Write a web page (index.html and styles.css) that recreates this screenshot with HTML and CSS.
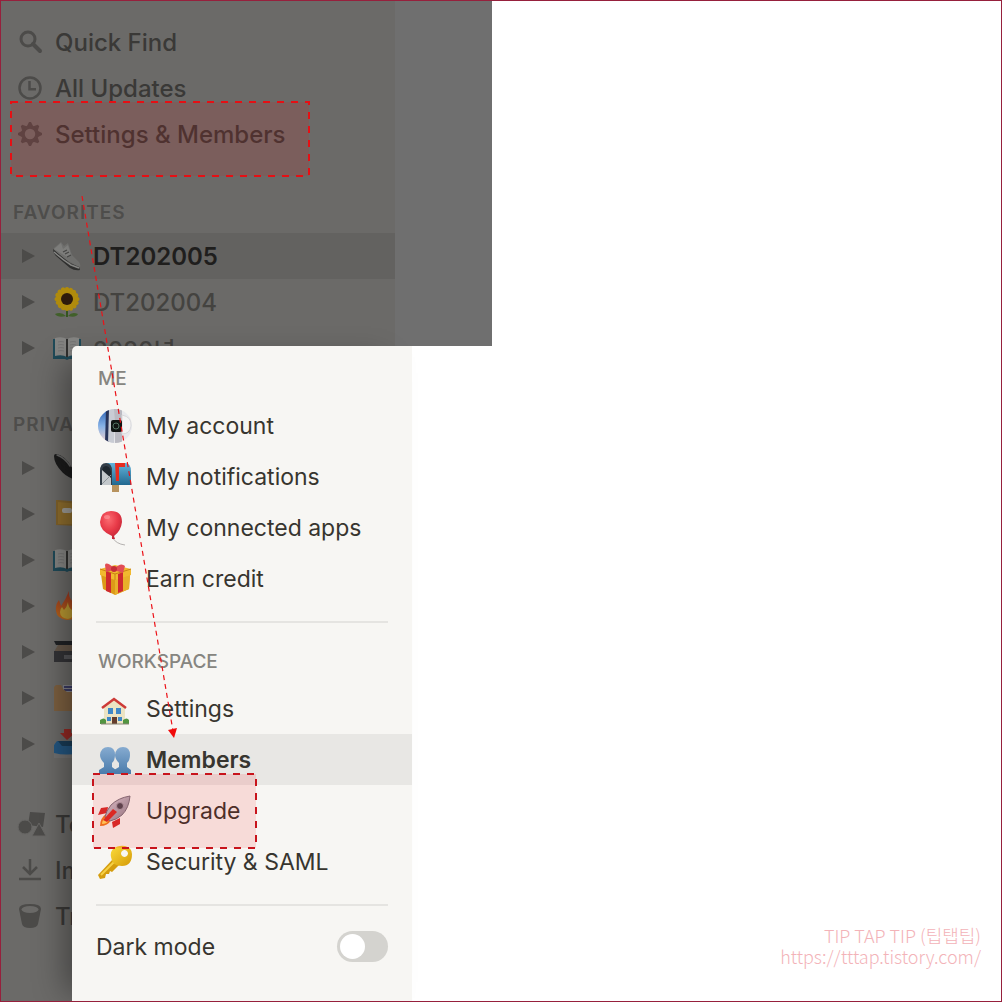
FILE: index.html
```html
<!DOCTYPE html>
<html lang="en">
<head>
<meta charset="utf-8">
<title>Settings &amp; Members</title>
<link rel="stylesheet" href="styles.css">
</head>
<body>
<svg class="defs" aria-hidden="true">
  <defs>
    <linearGradient id="gBlue" x1="0" y1="0" x2="0" y2="1"><stop offset="0" stop-color="#62b4dc"/><stop offset="1" stop-color="#22688f"/></linearGradient>
    <linearGradient id="gPeople" x1="0" y1="0" x2="0" y2="1"><stop offset="0" stop-color="#86abd0"/><stop offset="1" stop-color="#4a7bab"/></linearGradient>
    <radialGradient id="gBalloon" cx=".4" cy=".3" r=".8"><stop offset="0" stop-color="#fb6a70"/><stop offset=".5" stop-color="#e83a48"/><stop offset="1" stop-color="#b81f30"/></radialGradient>
    <linearGradient id="gKey" x1="0" y1="0" x2="1" y2="1"><stop offset="0" stop-color="#fbdc3c"/><stop offset="1" stop-color="#d59a06"/></linearGradient>
    <linearGradient id="gRocket" x1="0" y1="0" x2="1" y2="1"><stop offset="0" stop-color="#dcd6e0"/><stop offset="1" stop-color="#857e8c"/></linearGradient>
    <linearGradient id="gPhoto" x1="0" y1="0" x2="0" y2="1"><stop offset="0" stop-color="#2c62b4"/><stop offset=".5" stop-color="#86b2e6"/><stop offset="1" stop-color="#f3d3cf"/></linearGradient>
    <linearGradient id="gFlame" x1="0" y1="0" x2="0" y2="1"><stop offset="0" stop-color="#9c3420"/><stop offset="1" stop-color="#b9691a"/></linearGradient>
    <clipPath id="cPhoto"><circle cx="17" cy="17" r="17"/></clipPath>
    <symbol id="tri" viewBox="0 0 13 14"><path d="M0 0 13 7 0 14Z" fill="currentColor"/></symbol>
    <symbol id="book" viewBox="0 0 28 28">
      <path d="M0 5h28v20H16l-2 1-2-1H0Z" fill="#1f4a58"/>
      <path d="M2 4q7-2 12 1 5-3 12-1v18q-7-2-12 1-5-3-12-1Z" fill="#858583"/>
      <path d="M14 5v18" stroke="#30302f" stroke-width="2"/>
      <path d="M5 8q3-1 6 0M5 11q3-1 6 0M5 14q3-1 6 0M5 17q3-1 6 0M17 8q3-1 6 0M17 11q3-1 6 0M17 14q3-1 6 0M17 17q3-1 6 0" stroke="#757574" fill="none"/>
    </symbol>
  </defs>
</svg>

<main class="page">
  <nav class="sidebar" aria-label="Sidebar">
    <div class="group actions">
      <button class="row" type="button">
        <svg class="glyph" viewBox="0 0 24 24"><circle cx="10" cy="9" r="7" fill="none" stroke="currentColor" stroke-width="3"/><path d="m15 14 7 7" stroke="currentColor" stroke-width="4" stroke-linecap="round"/></svg>
        <span>Quick Find</span>
      </button>
      <button class="row" type="button">
        <svg class="glyph" viewBox="0 0 24 24"><circle cx="12" cy="12" r="10.5" fill="none" stroke="currentColor" stroke-width="2.5"/><path d="M11.500 5v8.200H18" fill="none" stroke="currentColor" stroke-width="2.500"/></svg>
        <span>All Updates</span>
      </button>
      <button class="row" type="button">
        <svg class="glyph" viewBox="0 0 24 24"><circle cx="12" cy="12" r="7" fill="none" stroke="currentColor" stroke-width="3.500"/><g fill="currentColor"><path id="tooth" d="M9 4 11 0h2l2 4Z"/><use href="#tooth" transform="rotate(45 12 12)"/><use href="#tooth" transform="rotate(90 12 12)"/><use href="#tooth" transform="rotate(135 12 12)"/><use href="#tooth" transform="rotate(180 12 12)"/><use href="#tooth" transform="rotate(225 12 12)"/><use href="#tooth" transform="rotate(270 12 12)"/><use href="#tooth" transform="rotate(315 12 12)"/></g></svg>
        <span>Settings &amp; Members</span>
      </button>
    </div>

    <h2 class="heading">FAVORITES</h2>
    <div class="group">
      <a class="row page-row current" href="#dt202005">
        <svg class="tri"><use href="#tri"/></svg>
        <svg class="emoji" viewBox="0 0 28 28"><path d="M1 6 8 0l3 4 4-3 4 12 7 7q2 3 1 5L22 23 1 10Z" fill="#6f6f6d"/><path d="m1 7 7-6 2 6 5-4 3 10-4 2Z" fill="#7d7d7b"/><path d="M0 7q8 7 17 14l9 4 1 3q-5 1-10-2L3 14Q0 11 0 7Z" fill="#2f2f2e"/><path d="M1 10q9 8 17 13l8 3" stroke="#858583" stroke-width="1.500" fill="none"/><path d="m10 10 4-2M12 12l4-2M14 15l4-2" stroke="#454544" stroke-width="1.200"/></svg>
        <span>DT202005</span>
      </a>
      <a class="row page-row" href="#dt202004">
        <svg class="tri"><use href="#tri"/></svg>
        <svg class="emoji" viewBox="1 1 28 28"><path d="M15 22v8" stroke="#34551f" stroke-width="2"/><path d="M14 29Q6 31 3 27q6-3 11 2Zm2 0q8 2 10-2-6-3-10 2Z" fill="#41602a"/><g fill="#b08b0c"><g id="petals"><ellipse cx="15" cy="4" rx="2.600" ry="4"/><ellipse cx="15" cy="20" rx="2.600" ry="4"/><ellipse cx="7" cy="12" rx="4.500" ry="2.600"/><ellipse cx="23" cy="12" rx="4.500" ry="2.600"/></g><use href="#petals" transform="rotate(22.500 15 12)"/><use href="#petals" transform="rotate(45 15 12)"/><use href="#petals" transform="rotate(67.500 15 12)"/></g><circle cx="15" cy="12" r="6" fill="#2e1b0c"/></svg>
        <span>DT202004</span>
      </a>
      <a class="row page-row" href="#y2020">
        <svg class="tri"><use href="#tri"/></svg>
        <svg class="emoji"><use href="#book"/></svg>
        <span>2020년</span>
      </a>
    </div>

    <h2 class="heading">PRIVATE</h2>
    <div class="group">
      <a class="row page-row" href="#p1" aria-label="Notes"><svg class="tri"><use href="#tri"/></svg>
        <svg class="emoji" viewBox="0 0 28 28"><path d="M3 2q8 2 13 11l10 12q-10-3-15-8Q3 9 3 2Z" fill="#1b1b1b" stroke="#1b1b1b" stroke-width="4" stroke-linejoin="round"/><path d="M4 1q8 3 13 11" fill="none" stroke="#656564" stroke-width="1.500" stroke-linecap="round"/></svg></a>
      <a class="row page-row" href="#p2" aria-label="Files"><svg class="tri"><use href="#tri"/></svg>
        <svg class="emoji" viewBox="0 0 28 28"><path d="M3 0h2l23 2v22l-3 2L3 25Z" fill="#80622a"/><path d="M5 2 28 4v20L5 24Z" fill="#8f6e2d"/><rect x="9" y="8" width="10" height="5" rx="2" fill="#a09e98"/></svg></a>
      <a class="row page-row" href="#p3" aria-label="Journal"><svg class="tri"><use href="#tri"/></svg>
        <svg class="emoji"><use href="#book"/></svg></a>
      <a class="row page-row" href="#p4" aria-label="Ideas"><svg class="tri"><use href="#tri"/></svg>
        <svg class="emoji" viewBox="0 0 28 28"><path d="M16-1q-1 6 4 11l2-4q5 8 4 13-3 9-12 9-10-1-11-9-1-6 3-11l2 6q5-7 8-15Z" fill="url(#gFlame)"/><path d="M15 10q0 5 4 8l2-2q2 9-6 11-8-1-8-7 0-3 2-5l2 3q3-3 4-8Z" fill="#bb9a32"/></svg></a>
      <a class="row page-row" href="#p5" aria-label="Cards"><svg class="tri"><use href="#tri"/></svg>
        <svg class="emoji" viewBox="0 0 28 28"><path d="M1 3h27v4H3Z" fill="#202225"/><path d="m5 7-4 7h27V7Z" fill="#66584a"/><path d="M1 13h27v11H1Z" fill="#333336"/><path d="M11 17h9v4h-9Z" fill="#555558"/></svg></a>
      <a class="row page-row" href="#p6" aria-label="Archive"><svg class="tri"><use href="#tri"/></svg>
        <svg class="emoji" viewBox="0 0 28 28"><path d="M10 1h15v8H10Z" fill="#828287"/><path d="M11 3h15M11 6h15" stroke="#3a3a63" stroke-width="2"/><path d="M1 3 3 1h5l2 4 4 3h14v19H1Z" fill="#7d6040"/></svg></a>
      <a class="row page-row" href="#p7" aria-label="Inbox"><svg class="tri"><use href="#tri"/></svg>
        <svg class="emoji" viewBox="0 0 28 28"><path d="M1 14h27v14H1Z" fill="#717171"/><path d="m4 11-3 4v8q12 3 27 0v-8l-3-4Z" fill="#235680"/><path d="M5 11h20l-3 5H9Z" fill="#193c57"/><path d="M11-1h7v4h4l-8 7-7-7h4Z" fill="#942a24"/></svg></a>
    </div>

    <div class="group tools">
      <button class="row" type="button">
        <svg class="glyph" viewBox="0 0 24 24"><path d="m12 0 15 1-2 14-15-2Z" fill="currentColor"/><circle cx="7" cy="15" r="7" fill="currentColor" stroke="#686765"/><path d="m21 11 7 13H14Z" fill="currentColor" stroke="#686765"/></svg>
        <span>Templates</span>
      </button>
      <button class="row" type="button">
        <svg class="glyph" viewBox="0 0 24 24"><path d="M12 1v14M5 9l7 7 7-7M1 21h22" fill="none" stroke="currentColor" stroke-width="2.500"/></svg>
        <span>Import</span>
      </button>
      <button class="row" type="button">
        <svg class="glyph" viewBox="0 0 24 24"><path d="M1 5q0-5 11-5t11 5l-3 15q-1 4-8 4t-8-4Z" fill="currentColor"/><ellipse cx="12" cy="5.500" rx="8.500" ry="3.500" fill="#6b6a68"/></svg>
        <span>Trash</span>
      </button>
    </div>
  </nav>
  <div class="canvas"></div>

  <section class="modal" aria-label="Settings">
    <h2 class="modal-heading">ME</h2>
    <div class="menu">
      <a class="item" href="#account">
        <svg class="icon" viewBox="0 0 34 34"><g clip-path="url(#cPhoto)"><path d="M0 0h34v34H0Z" fill="#e9eaed"/><path d="M0 0h10v34H0Z" fill="url(#gPhoto)"/><path d="M8 0h3v34H7Z" fill="#27345a"/><path d="M11 0h5v34h-6Z" fill="#c9ccd4"/><path d="M16 0h8v34h-7Z" fill="#babac2"/><path d="M24 6q10 2 9 11-1 8-9 8Z" fill="#f4f4f4" stroke="#d9d9db"/></g><rect x="13" y="11" width="11" height="12" rx="2" fill="#101413"/><circle cx="18" cy="17" r="3" fill="none" stroke="#517060"/></svg>
        <span>My account</span>
      </a>
      <a class="item" href="#notifications">
        <svg class="icon" viewBox="0 0 34 34"><path d="M14 22h7v10h-7Z" fill="#b8935e"/><path d="M8 3h20q5 1 5 8v14H10Z" fill="url(#gBlue)"/><path d="M2 25V11q0-8 6-8t6 8v14Z" fill="#343e48"/><path d="M4 25V12q0-6 4-6t5 6v13Z" fill="#1f272e"/><path d="M4 10 13 18v7H4Z" fill="#c3c8cb"/><path d="m4 24 9-9" stroke="#8e9599"/><path d="M17 3h10v4h-6v14h-3Z" fill="#e62c1f"/></svg>
        <span>My notifications</span>
      </a>
      <a class="item" href="#apps">
        <svg class="icon" viewBox="0 0 34 34"><path d="M14 26q4 7 13 8" fill="none" stroke="#b5b2b0"/><path d="M13 0q11 0 11 11-1 9-8 14l1 3h-3l0-3Q2 20 2 11 3 0 13 0Z" fill="url(#gBalloon)"/><ellipse cx="9" cy="6" rx="3" ry="2" fill="#ff9a9c" opacity=".6"/></svg>
        <span>My connected apps</span>
      </a>
      <a class="item" href="#credit">
        <svg class="icon" viewBox="0 0 34 34"><path d="m3 12 14 5 15-5-1 15-14 6-12-6Z" fill="#dc9a18"/><path d="m17 17 15-5-1 15-14 6Z" fill="#e8b02a"/><path d="m2 7 15-4 16 4v6l-16 5L2 13Z" fill="#f1b92f"/><path d="m2 7 15 5 16-5M17 12v6" fill="none" stroke="#c98413"/><path d="m8 9 5 2v20l-5-2Zm12 3 5-2v19l-5 2Z" fill="#cf2a2e"/><path d="M16 6Q8-1 7 3l1 7 8-2 9 3 2-7q-4-4-10 2Z" fill="#e24d55"/><circle cx="16" cy="7" r="3" fill="#c52e38"/></svg>
        <span>Earn credit</span>
      </a>
    </div>
    <hr class="rule">
    <h2 class="modal-heading">WORKSPACE</h2>
    <div class="menu">
      <a class="item" href="#settings">
        <svg class="icon" viewBox="0 0 34 34"><path d="M6 16 17 7l10 9v16H6Z" fill="#ece4c3"/><path d="m4 16 12-9 12 9" fill="none" stroke="#cd3a37" stroke-width="2.500"/><path d="M10 16h5v6h-5Zm8 0h5v6h-5ZM9 25h4v4H9Zm11 0h4v4h-4Z" fill="#3f88c8"/><path d="M14 25h5v7h-5Z" fill="#643d2c"/><path d="M2 28q4-3 6 0v4H2Zm23 0q4-3 6 0v4h-6Z" fill="#529541"/><path d="M3 32h28" stroke="#898577"/></svg>
        <span>Settings</span>
      </a>
      <a class="item selected" href="#members">
        <svg class="icon" viewBox="0 0 34 34"><path id="person" d="M10 4q7 0 7 8 0 5-3 8v4l4 3v4H1v-4l5-3v-4q-4-4-4-8 1-8 8-8Z" fill="url(#gPeople)"/><use href="#person" x="15"/></svg>
        <span>Members</span>
      </a>
      <a class="item" href="#upgrade">
        <svg class="icon" viewBox="0 0 34 34"><path d="M10 13 3 14 0 21l9-2Zm12 11v6l-7 4-1-6Z" fill="#d42e2c"/><path d="M8 20q-6 4-6 12 8 0 11-6Z" fill="#ed7b20"/><path d="M8 23q-4 3-4 7 5 0 7-4Z" fill="#ffdc62"/><path d="M32 2Q20 4 13 11 8 17 7 23l5 4q6-1 12-6Q31 14 32 2Z" fill="url(#gRocket)" stroke="#77727e"/><path d="m5 26 10-11 4 3-10 10Z" fill="#d82f29"/><circle cx="22" cy="12" r="3.500" fill="#4b4955" stroke="#aaa4af"/></svg>
        <span>Upgrade</span>
      </a>
      <a class="item" href="#security">
        <svg class="icon" viewBox="0 0 34 34"><path d="m15 14 6 6-7 7-2-1-1 3-3 0-1 4-5 1-2-4Z" fill="#d59d0e"/><path d="M3 30 18 15" stroke="#f6d145" stroke-width="2"/><path d="M15 4q5-4 12-3 7 2 7 8 0 12-10 12-10 0-11-9-1-5 2-8Zm11 1a3.500 3.500 0 1 0 1 0Z" fill="url(#gKey)" fill-rule="evenodd"/></svg>
        <span>Security &amp; SAML</span>
      </a>
    </div>
    <hr class="rule">
    <label class="switch-row"><span>Dark mode</span><input class="switch" type="checkbox" role="switch"></label>
  </section>

  <svg class="mark mark-settings" aria-hidden="true"><rect x="1" y="1" width="298" height="74"/></svg>
  <svg class="mark mark-upgrade" aria-hidden="true"><rect x="1" y="1" width="163" height="74"/></svg>
  <svg class="arrow" viewBox="0 0 100 546" aria-hidden="true"><path d="M2 1 93 536" stroke="#ec1218" stroke-width="1.200" stroke-dasharray="5 4"/><path d="m88 535 9-2-3 10Z" fill="#f00a0a"/></svg>

  <footer class="credit">
    <span>TIP TAP TIP (팁탭팁)</span>
    <a href="https://tttap.tistory.com/">https://tttap.tistory.com/</a>
  </footer>
</main>
</body>
</html>
```

FILE: styles.css
```css
* { box-sizing: border-box; }
body {
  margin: 0;
  background: #fff;
  font-family: Inter, "Noto Sans CJK KR", sans-serif;
}
h2, hr { margin: 0; }
a { color: inherit; text-decoration: none; }
button { font: inherit; color: inherit; background: none; border: 0; text-align: left; }
svg { flex: none; overflow: visible; }
.defs { position: absolute; width: 0; height: 0; }

.page {
  position: relative;
  display: flex;
  align-items: flex-start;
  min-height: 100vh;
  border: 1px solid #96203c;
  overflow: hidden;
}

/* Dimmed workspace behind the dialog */
.sidebar {
  flex: none;
  align-self: stretch;
  width: 394px;
  padding-top: 18px;
  background: #6b6a68;
  color: #3a3937;
  font-size: 24px;
  font-weight: 500;
}
.canvas { width: 97px; height: 345px; background: #6f6f6f; }
.group { display: flex; flex-direction: column; }
.row {
  display: flex;
  align-items: center;
  gap: 13px;
  height: 46px;
  padding: 0 17px;
  white-space: nowrap;
}
.page-row { padding-left: 21px; gap: 12px; color: #444340; }
.glyph { width: 24px; height: 24px; color: #4c4b49; }
.tri { width: 13px; height: 14px; margin-right: 6px; color: #4c4b49; }
.emoji { width: 28px; height: 28px; }
.current { background: #636260; color: #1f1e1d; font-weight: 600; }
.heading {
  padding: 36px 12px 4px;
  color: #4e4d4b;
  font-size: 19px;
  font-weight: 600;
  line-height: 32px;
  letter-spacing: 1px;
}
.actions { margin-bottom: 4px; }
.tools { margin-top: 34px; }
.group:not(.actions) + .heading { padding-top: 38px; }

/* Settings dialog */
.modal {
  position: absolute;
  top: 345px;
  bottom: 0;
  left: 71px;
  width: 340px;
  padding-top: 17px;
  border-radius: 5px 0 0 0;
  background: #f7f6f3;
  box-shadow: -18px 4px 30px -12px rgba(0, 0, 0, .4);
  color: #37352f;
  font-size: 23px;
}
.modal-heading {
  padding: 0 26px;
  color: #868580;
  font-size: 19px;
  font-weight: 500;
  line-height: 32px;
}
.menu { display: flex; flex-direction: column; padding-top: 5px; }
.item {
  display: flex;
  align-items: center;
  gap: 14px;
  height: 51px;
  padding: 0 26px;
}
.icon { width: 34px; height: 34px; }
.selected { background: #e8e7e4; font-weight: 600; }
.rule { height: 2px; margin: 17px 24px 23px; border: 0; background: #e5e4e1; }
.switch-row {
  display: flex;
  align-items: center;
  justify-content: space-between;
  padding: 2px 24px 0;
}
.switch {
  appearance: none;
  display: flex;
  align-items: center;
  width: 51px;
  height: 31px;
  margin: 0;
  padding: 0 3px;
  border-radius: 16px;
  background: #d4d3cf;
}
.switch::before { content: ""; width: 25px; height: 25px; border-radius: 50%; background: #fff; }
.switch:checked { justify-content: flex-end; background: #2eaadc; }

/* Annotations drawn over the screen */
.mark { position: absolute; height: 76px; fill: rgba(255, 0, 0, .11); stroke-width: 2; stroke-dasharray: 7 7; pointer-events: none; }
.mark-settings { top: 100px; left: 9px; width: 300px; stroke: #e60f14; }
.mark-upgrade { top: 772px; left: 91px; width: 165px; stroke: #c8141c; }
.arrow { position: absolute; top: 194px; left: 79px; width: 100px; height: 546px; pointer-events: none; }
.credit {
  position: absolute;
  right: 20px;
  bottom: 34px;
  display: grid;
  justify-items: end;
  color: #f3b3b8;
  font-family: "Noto Sans CJK KR", sans-serif;
  font-size: 18px;
  font-weight: 300;
  line-height: 21px;
}
```
